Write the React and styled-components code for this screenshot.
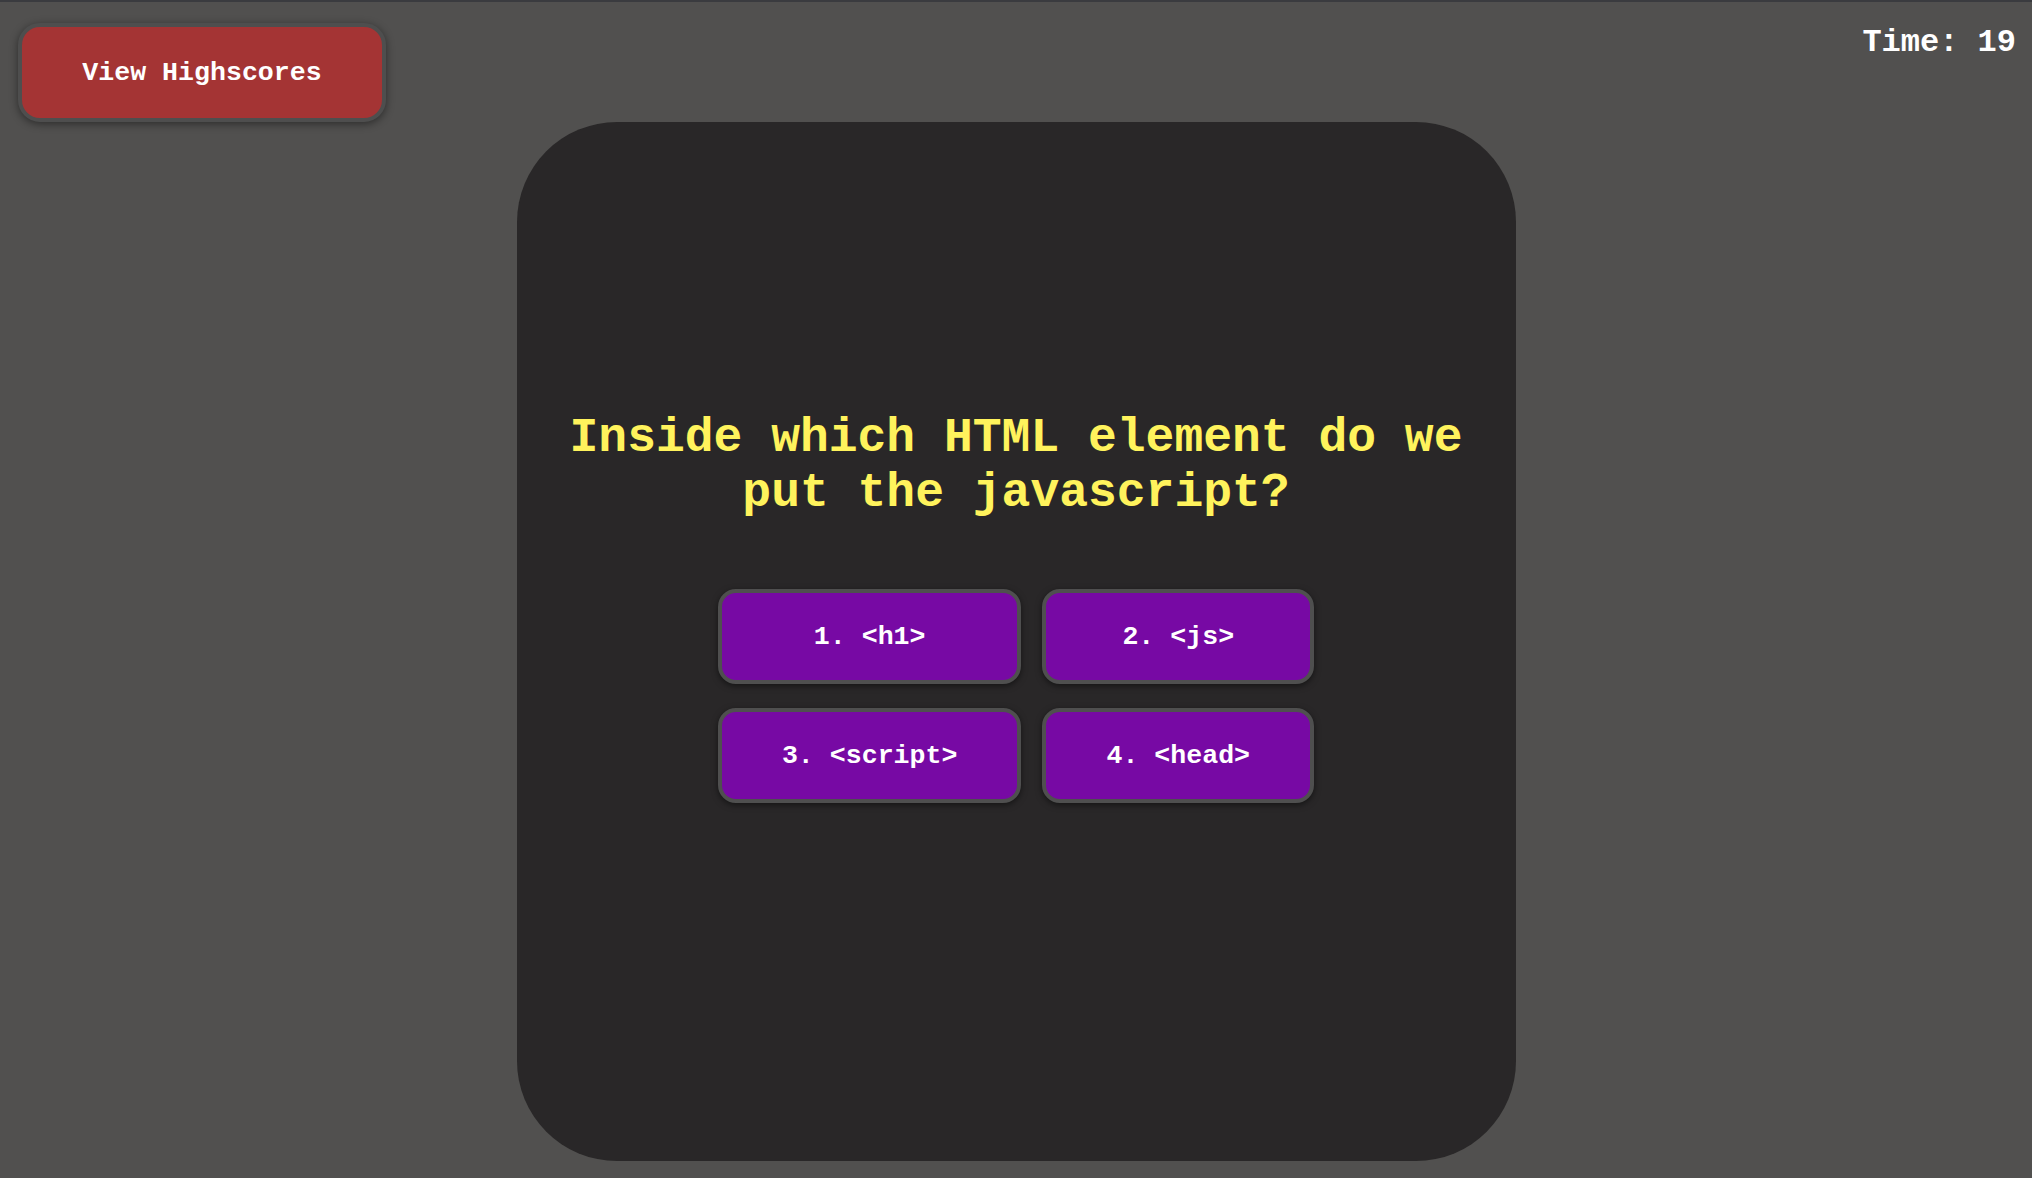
import React, { useState } from 'react';
import styled, { createGlobalStyle } from 'styled-components';

const GlobalStyle = createGlobalStyle`
  html, body {
    margin: 0;
    padding: 0;
    background: #51504f;
  }
  body {
    font-family: "Liberation Mono", "Courier New", monospace;
    border-top: 2px solid #3a3b3f;
  }
`;

const Page = styled.div`
  min-height: 1176px;
  display: flex;
  flex-direction: column;
  align-items: center;
  box-sizing: border-box;
`;

const TopBar = styled.header`
  align-self: stretch;
  display: flex;
  justify-content: space-between;
  align-items: flex-start;
  height: 120px;
  padding: 21px 16px 0 18px;
  box-sizing: border-box;
`;

const HighscoresButton = styled.button`
  width: 368px;
  height: 99px;
  background: #a43434;
  color: #fff;
  border: 4px solid #4e4e4e;
  border-radius: 22px;
  box-shadow: 0 2px 8px rgba(0, 0, 0, 0.45);
  font-family: "Liberation Mono", "Courier New", monospace;
  font-weight: bold;
  font-size: 26.6px;
  cursor: pointer;
`;

const Timer = styled.div`
  color: #fff;
  font-weight: bold;
  font-size: 32px;
  margin-top: 1px;
`;

const Card = styled.main`
  width: 999px;
  height: 1039px;
  background: #292728;
  border-radius: 100px;
  display: flex;
  flex-direction: column;
  align-items: center;
  justify-content: center;
  padding: 0 30px 69px;
  box-sizing: border-box;
`;

const Question = styled.h1`
  margin: 0 0 68px;
  color: #fff35c;
  font-size: 48px;
  font-weight: bold;
  text-align: center;
  line-height: 55px;
  max-width: 900px;
`;

const Answers = styled.div`
  display: grid;
  grid-template-columns: auto auto;
  column-gap: 21px;
  row-gap: 24px;
`;

const AnswerButton = styled.button`
  height: 95px;
  padding: 0 60px;
  background: #7709a4;
  color: #fff;
  border: 4px solid #4f4f4f;
  border-radius: 18px;
  box-shadow: 0 2px 6px rgba(0, 0, 0, 0.5);
  font-family: "Liberation Mono", "Courier New", monospace;
  font-weight: bold;
  font-size: 26.6px;
  white-space: pre;
  cursor: pointer;
`;

const answers = ['<h1>', '<js>', '<script>', '<head>'];

export default function App() {
  const [time] = useState(19);

  return (
    <>
      <GlobalStyle />
      <Page>
        <TopBar>
          <HighscoresButton>View Highscores</HighscoresButton>
          <Timer>Time: {time}</Timer>
        </TopBar>
        <Card>
          <Question>Inside which HTML element do we put the javascript?</Question>
          <Answers>
            {answers.map((a, i) => (
              <AnswerButton key={a}>{`${i + 1}. ${a}`}</AnswerButton>
            ))}
          </Answers>
        </Card>
      </Page>
    </>
  );
}
